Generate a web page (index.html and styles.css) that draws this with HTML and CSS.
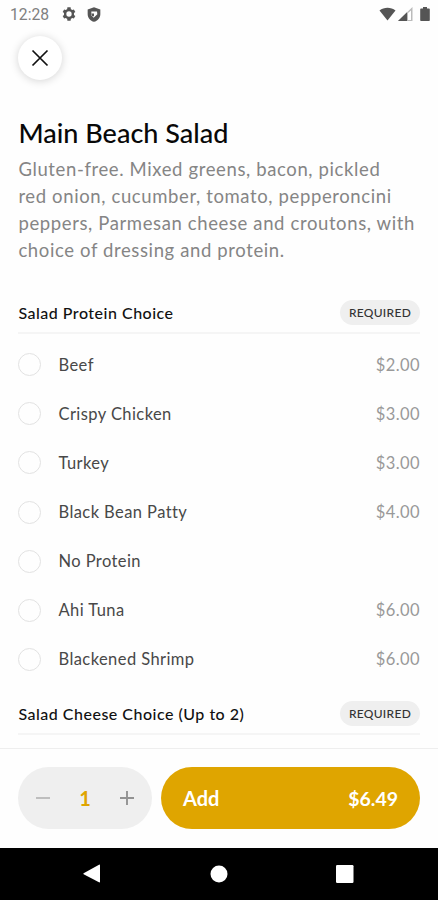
FILE: index.html
```html
<!DOCTYPE html>
<html lang="en">
<head>
<meta charset="utf-8">
<title>Main Beach Salad</title>
<link rel="stylesheet" href="styles.css">
</head>
<body>
<div class="screen">
  <header class="status">
    <span class="clock">12:28</span>
    <svg class="gear" width="16" height="16" viewBox="0 0 24 24"><path fill="#555" fill-rule="evenodd" d="M19.400 13.500a7.500 7.500 0 0 0 0-3l2.100-1.600-2.200-3.800-2.500 1a7.300 7.300 0 0 0-2-1.200L14.400 2H9.600l-.4 2.900a7.300 7.300 0 0 0-2 1.200l-2.500-1-2.200 3.800 2.100 1.600a7.500 7.500 0 0 0 0 3l-2.100 1.600 2.200 3.800 2.500-1a7.300 7.300 0 0 0 2 1.200l.4 2.900h4.800l.4-2.900a7.300 7.300 0 0 0 2-1.200l2.500 1 2.200-3.800zM12 16a4 4 0 1 1 0-8 4 4 0 0 1 0 8z"/></svg>
    <svg class="shield" width="16" height="17" viewBox="0 0 24 25"><path fill="#555" fill-rule="evenodd" d="M12 1.500 2.500 5v7c0 5.500 4 10 9.500 11.500 5.500-1.500 9.500-6 9.500-11.500V5zM8 8h8.500l.5 4-5.500 5.500L8 14z"/><path fill="#555" d="M8 11h4v4H9z"/></svg>
    <span class="grow"></span>
    <svg width="17" height="14" viewBox="0 0 17 14"><path fill="#555" d="M.5 3.500C5-.2 12-.2 16.500 3.500L8.500 13.500z"/></svg>
    <svg class="signal" width="15" height="14" viewBox="0 0 15 14"><path fill="#bbb" d="M0 14 14.500 0v14z"/><path fill="#555" d="M0 14 9 5.300V14z"/><path fill="#fff" d="M10 6l3-2.500V13h-3z"/></svg>
    <svg class="battery" width="10" height="14" viewBox="0 0 10 14"><path fill="#555" d="M1 1.500h2V0h4v1.500h2a.8.8 0 0 1 .8.8v10.900a.8.8 0 0 1-.8.800H1a.8.8 0 0 1-.8-.8V2.300a.8.8 0 0 1 .8-.8z"/></svg>
  </header>
  <main class="content">
    <button class="close" aria-label="Close"><svg width="18" height="18" viewBox="0 0 18 18"><path d="M1.500 1.500l15 15M16.500 1.500l-15 15" stroke="#111" stroke-width="1.700"/></svg></button>
    <h1>Main Beach Salad</h1>
    <p class="desc">Gluten-free. Mixed greens, bacon, pickled<br>red onion, cucumber, tomato, pepperoncini<br>peppers, Parmesan cheese and croutons, with<br>choice of dressing and protein.</p>
    <section>
      <div class="head"><h2>Salad Protein Choice</h2><span class="tag">REQUIRED</span></div>
      <ul>
        <li><i class="radio"></i><span>Beef</span><b>$2.00</b></li>
        <li><i class="radio"></i><span>Crispy Chicken</span><b>$3.00</b></li>
        <li><i class="radio"></i><span>Turkey</span><b>$3.00</b></li>
        <li><i class="radio"></i><span>Black Bean Patty</span><b>$4.00</b></li>
        <li><i class="radio"></i><span>No Protein</span></li>
        <li><i class="radio"></i><span>Ahi Tuna</span><b>$6.00</b></li>
        <li><i class="radio"></i><span>Blackened Shrimp</span><b>$6.00</b></li>
      </ul>
    </section>
    <section>
      <div class="head"><h2>Salad Cheese Choice (Up to 2)</h2><span class="tag">REQUIRED</span></div>
    </section>
  </main>
  <footer class="order">
    <div class="stepper">
      <svg width="14" height="14" viewBox="0 0 14 14"><path d="M0 7h14" stroke="#b8b8b8" stroke-width="1.800"/></svg>
      <span>1</span>
      <svg width="14" height="14" viewBox="0 0 14 14"><path d="M0 7h14M7 0v14" stroke="#929292" stroke-width="1.900"/></svg>
    </div>
    <button class="add"><span>Add</span><span class="total">$6.49</span></button>
  </footer>
  <nav class="nav">
    <svg width="18" height="20" viewBox="0 0 18 20"><path fill="#fff" d="M.6 9.300 16 .7q1-.4 1 .6v16.400q0 1-1 .6L.6 10.300q-.6-.5 0-1z"/></svg>
    <svg width="18" height="18" viewBox="0 0 18 18"><circle cx="9" cy="9" r="8.500" fill="#fff"/></svg>
    <svg width="18" height="18" viewBox="0 0 18 18"><rect width="17.500" height="18" rx="1.200" fill="#fff"/></svg>
  </nav>
</div>
</body>
</html>
```
FILE: styles.css
```css
* { box-sizing: border-box; }
body { margin: 0; background: #fefefe; font-family: Lato, sans-serif; color: #111; }
h1, h2, p, ul { margin: 0; padding: 0; }
button { border: 0; padding: 0; font: inherit; }
svg { display: block; flex: none; }
.screen { width: 438px; height: 900px; display: flex; flex-direction: column; overflow: hidden; }
.status { height: 28px; flex: none; display: flex; align-items: center; padding: 0 8px 0 10px; }
.clock { font: 400 15.700px/28px Roboto, sans-serif; color: #808080; width: 51px; padding-top: 1px; white-space: nowrap; }
.shield { margin-left: 9px; }
.grow { flex: 1; }
.signal { margin-left: 2px; }
.battery { margin-left: 7px; }
.content { flex: 1; min-height: 0; padding: 8px 18px 0; overflow: hidden; }
.close { width: 44px; height: 44px; border-radius: 50%; background: #fff; display: flex; align-items: center; justify-content: center; box-shadow: 0 1px 9px rgba(0,0,0,.17); }
h1 { margin-top: 37px; padding-left: .5px; font-size: 27px; font-weight: 500; line-height: 32px; color: #080808; white-space: nowrap; }
.desc { margin-top: 7.400px; padding-left: .4px; font-size: 18.500px; line-height: 26.700px; letter-spacing: .62px; color: #858585; white-space: nowrap; }
.head { height: 42px; display: flex; align-items: center; justify-content: space-between; border-bottom: 2px solid #f5f5f5; }
h2 { padding-left: .4px; font-size: 16px; font-weight: 500; letter-spacing: .5px; color: #111; white-space: nowrap; }
.tag { width: 80px; height: 25px; border-radius: 13px; background: #efefef; color: #333; font-size: 12px; font-weight: 500; line-height: 25px; text-align: center; letter-spacing: .3px; }
.desc + section { margin-top: 29px; }
ul { list-style: none; padding: 6px 0 9.600px; }
li { height: 49.100px; display: flex; align-items: center; font-size: 16.500px; letter-spacing: .42px; color: #484848; }
.radio { width: 23px; height: 23px; border: 1.500px solid #e2e2e2; border-radius: 50%; margin-right: 17.500px; }
li b { margin-left: auto; font-weight: 400; color: #999; }
.order { height: 99.500px; flex: none; border-top: 1.500px solid #eee; padding: 18px 18px 0; display: flex; gap: 9px; }
.stepper { width: 134px; height: 62px; border-radius: 31px; background: #efefef; display: flex; align-items: center; justify-content: space-between; padding: 0 18px; color: #dfa500; font-size: 20px; font-weight: 700; }
.add { flex: 1; height: 62px; border-radius: 31px; background: #dfa500; display: flex; align-items: center; justify-content: space-between; padding: 0 22px; color: #fff; font-size: 20px; font-weight: 700; }
.total { font-size: 19.500px; }
.nav { height: 52.500px; flex: none; background: #000; display: flex; align-items: center; justify-content: space-between; padding: 0 84px 0 83px; }
```
